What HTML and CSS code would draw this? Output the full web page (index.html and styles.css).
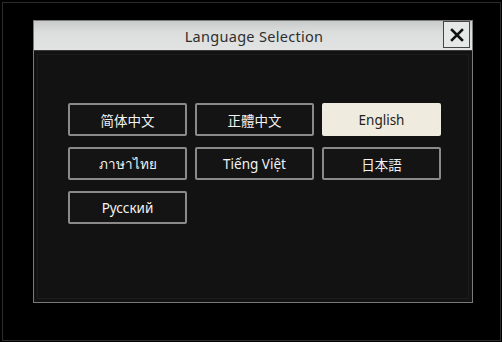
FILE: index.html
```html
<!DOCTYPE html>
<html lang="en">
<head>
    <meta charset="UTF-8">
    <title>Language Selection</title>
    <link rel="stylesheet" href="styles.css">
</head>
<body>
    <div class="screen">
        <div class="dialog">
            <!-- Title bar -->
            <div class="title-bar">
                <span class="title">Language Selection</span>
                <button class="close-btn" aria-label="Close">
                    <svg width="14" height="14" viewBox="0 0 14 14">
                        <path d="M2 2 L12 12 M12 2 L2 12" stroke="#111" stroke-width="2.6" stroke-linecap="square"/>
                    </svg>
                </button>
            </div>
            <!-- Language list -->
            <div class="dialog-body">
                <div class="lang-list">
                    <button class="lang-btn" lang="zh-CN">简体中文</button>
                    <button class="lang-btn" lang="zh-TW">正體中文</button>
                    <button class="lang-btn selected">English</button>
                    <button class="lang-btn" lang="th">ภาษาไทย</button>
                    <button class="lang-btn" lang="vi">Tiếng Việt</button>
                    <button class="lang-btn" lang="ja">日本語</button>
                    <button class="lang-btn" lang="ru">Русский</button>
                </div>
            </div>
        </div>
    </div>
</body>
</html>
```

FILE: styles.css
```css
/* Reset */
* {
    margin: 0;
    padding: 0;
    box-sizing: border-box;
}
body {
    width: 502px;
    height: 342px;
    padding: 2px;
    background: #000;
    font-family: "Noto Sans", "Noto Sans CJK SC", sans-serif;
    overflow: hidden;
}

/* Outer frame of the screen */
.screen {
    width: 499px;
    height: 339px;
    border: 1px solid #2c2c2c;
    padding: 17px 0 0 30px;
}

/* Dialog box */
.dialog {
    width: 440px;
    height: 283px;
    border: 1px solid #7a7a7a;
    background: #121212;
    display: flex;
    flex-direction: column;
}
.title-bar {
    height: 30px;
    flex-shrink: 0;
    position: relative;
    display: flex;
    align-items: center;
    justify-content: center;
    background: linear-gradient(to bottom, #c9cbcb, #dcdede 40%, #e2e3e3);
    border-bottom: 1px solid #3a3a3a;
}
.title {
    font-size: 14.5px;
    color: #2e2e2e;
    letter-spacing: 0.3px;
    padding-left: 2px;
}
.close-btn {
    position: absolute;
    top: 0;
    right: 2px;
    width: 27px;
    height: 27px;
    border: 1px solid #444;
    background: #e6e7e7;
    display: flex;
    align-items: center;
    justify-content: center;
}
.dialog-body {
    flex: 1;
    box-shadow: inset 0 0 0 3px #121212, inset 0 0 0 4px #1c1c1c;
    padding: 52px 0 0 34px;
}

/* Language buttons */
.lang-list {
    display: grid;
    grid-template-columns: repeat(3, 119px);
    grid-auto-rows: 33px;
    column-gap: 8px;
    row-gap: 11px;
}
.lang-btn {
    font-family: "Noto Sans", "Noto Sans CJK SC", sans-serif;
    font-size: 13.5px;
    color: #f2f2f2;
    background: #141414;
    border: 2px solid #8a8a8a;
    border-radius: 2px;
}
.lang-btn:lang(zh-TW) {
    font-family: "Noto Sans", "Noto Sans CJK TC", sans-serif;
}
.lang-btn:lang(ja) {
    font-family: "Noto Sans", "Noto Sans CJK JP", sans-serif;
}
.lang-btn.selected {
    background: #efebdf;
    border-color: #efebdf;
    color: #222;
}
```
